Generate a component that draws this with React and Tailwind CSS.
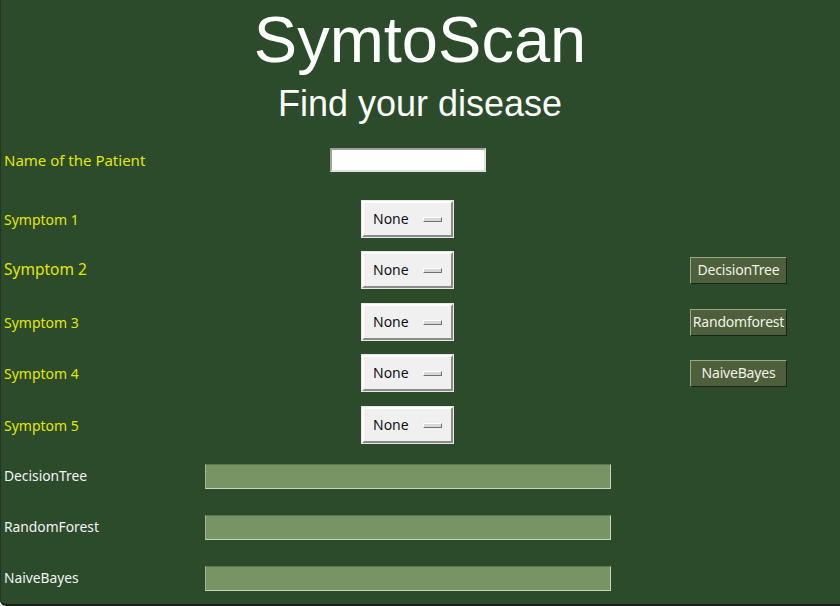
import React from "react";

const label = "font-['Noto_Sans','Open_Sans',sans-serif]";

function OptionMenu() {
  return (
    <div className="w-[93px] h-[38px] border border-[#e8e8e8] bg-[#f0f0f0] flex">
      <div className="flex-1 flex items-center border-t-2 border-l-2 border-t-white border-l-white border-b-2 border-r-2 border-b-[#8a8a8a] border-r-[#8a8a8a] pl-[9px]">
        <span className={`${label} text-[14px] text-[#101020] leading-none`}>None</span>
        <div className="ml-[14px] w-[19px] h-[5px] bg-[#d8d8d8] border-t border-l border-t-white border-l-white border-b border-r border-b-[#707070] border-r-[#707070]" />
      </div>
    </div>
  );
}

function GreenButton({ children }) {
  return (
    <div className="w-[97px] h-[27px] bg-[#4d5f3b] border border-t-[#9aa888] border-l-[#9aa888] border-b-[#1a2416] border-r-[#1a2416] flex items-center justify-center">
      <span className={`${label} text-[14px] tracking-[-0.2px] text-[#f2f2e6] leading-none whitespace-nowrap`}>{children}</span>
    </div>
  );
}

function SymptomRow({ text, size, mt, button }) {
  return (
    <div className={`h-[38px] flex items-center ${mt}`}>
      <div className={`w-[361px] pl-[4px] ${label} ${size} text-[#e4e800]`}>{text}</div>
      <OptionMenu />
      <div className="w-[236px]" />
      {button ? <GreenButton>{button}</GreenButton> : null}
    </div>
  );
}

function OutputRow({ text, mt }) {
  return (
    <div className={`h-[25px] flex items-center ${mt}`}>
      <div className={`w-[205px] pl-[4px] ${label} text-[13.8px] text-[#f4f4f4]`}>{text}</div>
      <div className="w-[406px] h-[25px] bg-[#789464] border border-t-[#5a744e] border-l-[#a4b894] border-b-[#c8d6b8] border-r-[#c8d6b8]" />
    </div>
  );
}

export default function App() {
  return (
    <div className="w-[840px] h-[606px] bg-[#2b4b2b] overflow-hidden flex flex-col shadow-[inset_1px_0_0_#22352a] border-b-2 border-b-[#1c1c1c] rounded-bl-[6px]">
      <div className="h-[76px] pt-[2px] text-center font-['Liberation_Sans',Arial,sans-serif] text-[65px] leading-[76px] text-white">
        SymtoScan
      </div>
      <div className="mt-[8px] h-[40px] text-center font-['Liberation_Sans',Arial,sans-serif] text-[36px] leading-[40px] text-white">
        Find your disease
      </div>
      <div className="mt-[24px] h-[24px] flex items-center">
        <div className={`w-[330px] pl-[4px] ${label} text-[15px] text-[#e4e800]`}>Name of the Patient</div>
        <div className="w-[156px] h-[24px] bg-white border-2 border-t-[#a0a0a0] border-l-[#a0a0a0] border-b-[#e0e0e0] border-r-[#e0e0e0]" />
      </div>
      <SymptomRow text="Symptom 1" size="text-[14px]" mt="mt-[28px]" />
      <SymptomRow text="Symptom 2" size="text-[15.5px]" mt="mt-[13px]" button="DecisionTree" />
      <SymptomRow text="Symptom 3" size="text-[14px]" mt="mt-[14px]" button="Randomforest" />
      <SymptomRow text="Symptom 4" size="text-[14px]" mt="mt-[13px]" button="NaiveBayes" />
      <SymptomRow text="Symptom 5" size="text-[14px]" mt="mt-[14px]" />
      <OutputRow text="DecisionTree" mt="mt-[20px]" />
      <OutputRow text="RandomForest" mt="mt-[26px]" />
      <OutputRow text="NaiveBayes" mt="mt-[26px]" />
    </div>
  );
}
